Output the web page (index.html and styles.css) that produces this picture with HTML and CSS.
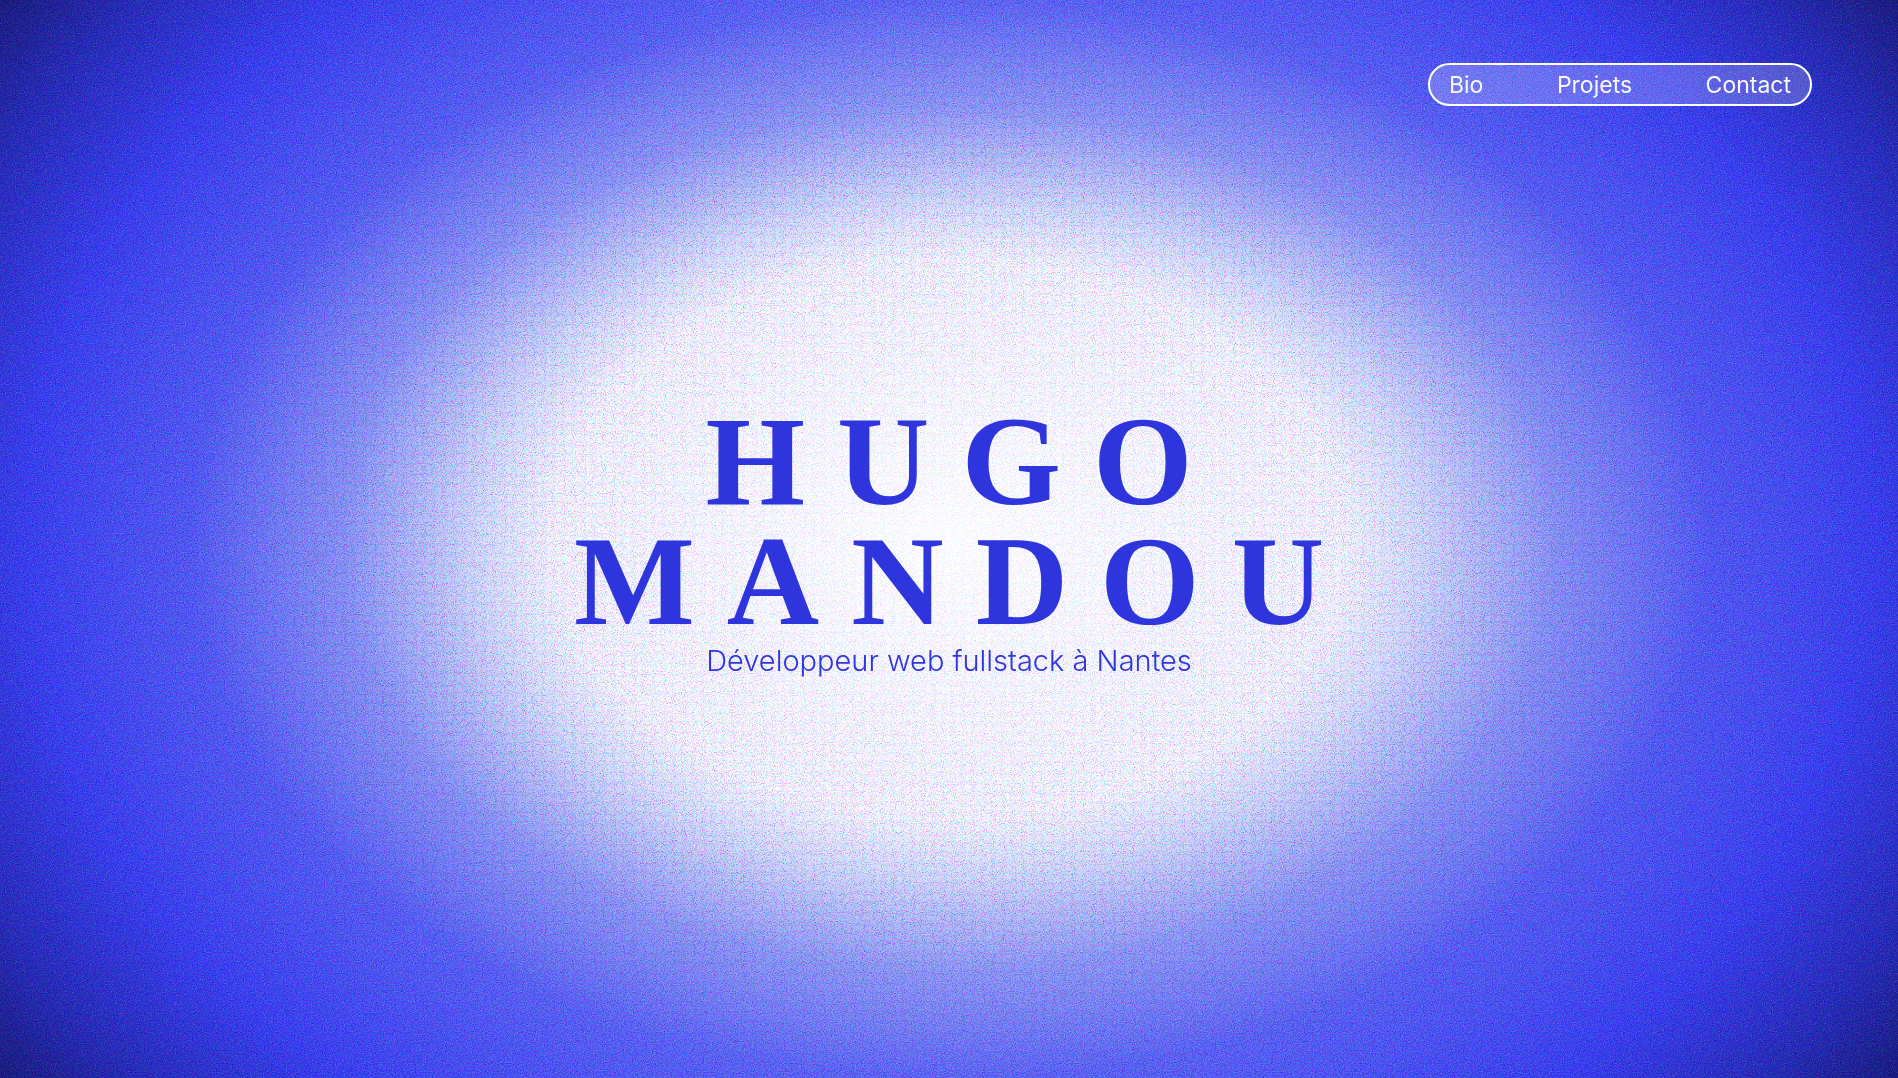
FILE: index.html
```html
<!DOCTYPE html>
<html lang="fr">
<head>
<meta charset="utf-8">
<meta name="viewport" content="width=device-width, initial-scale=1">
<title>Hugo Mandou</title>
<link rel="stylesheet" href="styles.css">
</head>
<body>
<div class="page">
  <svg class="grain grain-soft" aria-hidden="true">
    <filter id="noise" x="0" y="0" width="100%" height="100%" color-interpolation-filters="sRGB">
      <feTurbulence type="fractalNoise" baseFrequency="0.9" numOctaves="3" stitchTiles="stitch"/>
      <feColorMatrix values="1.2 0 0 0 -0.15  0 1.2 0 0 -0.15  0 0 0.5 0 0.22  0 0 0 0 1"/>
    </filter>
    <rect width="100%" height="100%" filter="url(#noise)"/>
  </svg>
  <svg class="grain grain-tint" aria-hidden="true">
    <filter id="tint" x="0" y="0" width="100%" height="100%" color-interpolation-filters="sRGB">
      <feTurbulence type="fractalNoise" baseFrequency="0.9" numOctaves="3" seed="4" stitchTiles="stitch"/>
      <feColorMatrix values="1.6 0 0 0 0.2  0 1.6 0 0 0.2  0 0 0.6 0 0.7  0 0 0 0 1"/>
    </filter>
    <rect width="100%" height="100%" filter="url(#tint)"/>
  </svg>
  <header class="header">
    <nav class="nav">
      <a href="#bio">Bio</a>
      <a href="#projets">Projets</a>
      <a href="#contact">Contact</a>
    </nav>
  </header>
  <main class="hero">
    <h1 class="name">HUGO<br>MANDOU</h1>
    <p class="role">Développeur web fullstack à Nantes</p>
  </main>
</div>
</body>
</html>
```
FILE: styles.css
```css
* {
  box-sizing: border-box;
}

body {
  margin: 0;
  font-family: Inter, "Liberation Sans", sans-serif;
  color: #2f35dc;
}

.page {
  min-height: 100vh;
  display: grid;
  grid-template-rows: 1fr auto 1fr;
  position: relative;
  isolation: isolate;
  background:
    radial-gradient(ellipse 40% 50% at center, #fff 0%, #faf9ff 52%, rgba(238, 244, 255, 0.82) 62%, rgba(205, 215, 250, 0.36) 80%, rgba(190, 200, 250, 0) 100%),
    radial-gradient(ellipse 64% 88% at center, #a0a8fa 30%, #5f67f5 60%, #3f45f0 76%, #2a2fbc 88%, #17176e 100%);
}

.grain {
  position: absolute;
  inset: 0;
  z-index: -1;
  width: 100%;
  height: 100%;
}

.grain-soft {
  mix-blend-mode: soft-light;
}

.grain-tint {
  mix-blend-mode: multiply;
  -webkit-mask-image: radial-gradient(ellipse 40% 50% at center, rgba(0, 0, 0, 0.2), #000 70%, rgba(0, 0, 0, 0.5) 110%);
  mask-image: radial-gradient(ellipse 40% 50% at center, rgba(0, 0, 0, 0.2), #000 70%, rgba(0, 0, 0, 0.5) 110%);
}

.header {
  display: flex;
  justify-content: flex-end;
  align-items: flex-start;
  padding: 63px 86px 0;
}

.nav {
  display: flex;
  justify-content: space-between;
  align-items: center;
  width: 384px;
  height: 43px;
  padding: 0 19px;
  border: 2px solid #fff;
  border-radius: 22px;
  background: rgba(255, 255, 255, 0.2);
  font-size: 23px;
}

.nav a {
  color: #f8f8f8;
  text-decoration: none;
}

.hero {
  padding-top: 4px;
  text-align: center;
}

.name {
  margin: 0;
  padding-left: 32px;
  font: bold 128px/120px "Liberation Serif", serif;
  letter-spacing: 32px;
}

.role {
  margin: 0;
  font-size: 29px;
  font-weight: 300;
  line-height: 40px;
}
```
